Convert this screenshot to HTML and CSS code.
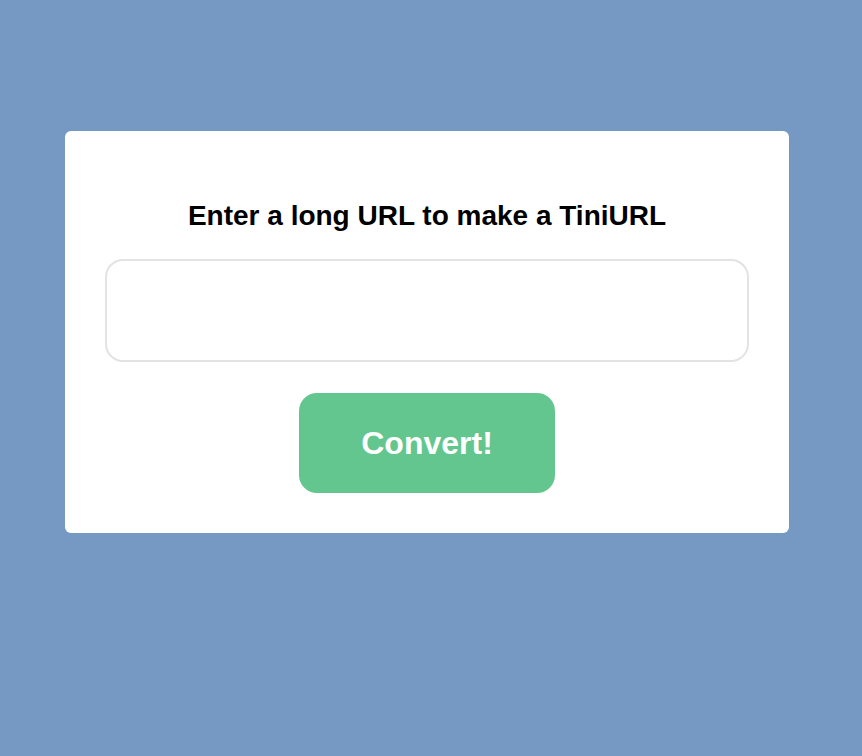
FILE: index.html
```html
<!DOCTYPE html>
<html>
<head>
<meta charset="utf-8">
<link rel="stylesheet" href="styles.css">
</head>
<body>
<div class="card">
  <h1 class="title">Enter a long URL to make a TiniURL</h1>
  <input class="url-input" type="text">
  <button class="convert">Convert!</button>
</div>
</body>
</html>
```
FILE: styles.css
```css
html, body {
  margin: 0;
  padding: 0;
  background: #7699c3;
  height: 100%;
}
body {
  padding-top: 131px;
  padding-left: 65px;
  box-sizing: border-box;
  font-family: "Liberation Sans", Arial, sans-serif;
}
.card {
  width: 724px;
  height: 402px;
  box-sizing: border-box;
  background: #fff;
  border-radius: 6px;
  padding: 70px 40px 0;
  display: flex;
  flex-direction: column;
  align-items: center;
}
.title {
  margin: 0;
  font-size: 28px;
  font-weight: bold;
  color: #000;
  line-height: 30px;
}
.url-input {
  margin-top: 28px;
  width: 644px;
  height: 103px;
  box-sizing: border-box;
  border: 2px solid #e3e3e3;
  border-radius: 18px;
  outline: none;
  background: #fff;
}
.convert {
  margin-top: 31px;
  width: 256px;
  height: 100px;
  border: none;
  border-radius: 18px;
  background: #63c68e;
  color: #fff;
  font-family: "Liberation Sans", Arial, sans-serif;
  font-weight: bold;
  font-size: 32px;
}
```
